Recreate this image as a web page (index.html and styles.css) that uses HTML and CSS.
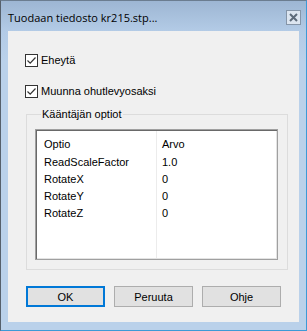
FILE: index.html
```html
<!DOCTYPE html>
<html>
<head>
<meta charset="utf-8">
<link rel="stylesheet" href="styles.css">
</head>
<body>
<div class="window">
  <div class="titlebar">
    <span class="title">Tuodaan tiedosto kr215.stp...</span>
    <span class="close">
      <svg width="9" height="9" viewBox="0 0 9 9"><path d="M1 1 L8 8 M8 1 L1 8" stroke="#5d6b7a" stroke-width="2" fill="none"/></svg>
    </span>
  </div>
  <div class="client">
    <label class="check"><span class="box"><svg width="11" height="11" viewBox="0 0 11 11"><path d="M1.5 5.5 L4.2 8.2 L9.5 2.5" stroke="#333" stroke-width="1.2" fill="none"/></svg></span>Eheytä</label>
    <label class="check second"><span class="box"><svg width="11" height="11" viewBox="0 0 11 11"><path d="M1.5 5.5 L4.2 8.2 L9.5 2.5" stroke="#333" stroke-width="1.2" fill="none"/></svg></span>Muunna ohutlevyosaksi</label>
    <fieldset class="group">
      <legend>Kääntäjän optiot</legend>
      <div class="list">
        <div class="col-line"></div>
        <div class="row tall"><span class="c1">Optio</span><span class="c2">Arvo</span></div>
        <div class="row tall"><span class="c1">ReadScaleFactor</span><span class="c2">1.0</span></div>
        <div class="row"><span class="c1">RotateX</span><span class="c2">0</span></div>
        <div class="row"><span class="c1">RotateY</span><span class="c2">0</span></div>
        <div class="row"><span class="c1">RotateZ</span><span class="c2">0</span></div>
      </div>
    </fieldset>
    <div class="buttons">
      <button class="btn default">OK</button>
      <button class="btn">Peruuta</button>
      <button class="btn">Ohje</button>
    </div>
  </div>
</div>
</body>
</html>
```
FILE: styles.css
```css
html, body {
  margin: 0;
  padding: 0;
  background: #ffffff;
}
.window {
  width: 307px;
  height: 331px;
  box-sizing: border-box;
  border-top: 1px solid #6b7d90;
  border-left: 1px solid #56606b;
  border-right: 1px solid #3d9ad6;
  border-bottom: 1px solid #3d9ad6;
  background: linear-gradient(to bottom, #9db6d3 0px, #b3cbe6 30px, #bad1ea 60px, #bad1ea 100%);
  padding: 0 7px 8px 7px;
  display: flex;
  flex-direction: column;
}
.titlebar {
  height: 30px;
  display: flex;
  align-items: center;
  justify-content: space-between;
  margin: 0 -7px;
  padding: 0 5px 0 7px;
}
.title {
  font-family: "Open Sans", "Noto Sans", sans-serif;
  font-size: 11px;
  color: #000;
  margin-top: 3px;
}
.close {
  width: 13px;
  height: 13px;
  border: 1px solid #8595a8;
  background: #dce5f0;
  display: flex;
  align-items: center;
  justify-content: center;
  margin-top: 2px;
}
.client {
  flex: 1;
  background: #f0f0f0;
  padding: 23px 0 0 17px;
  font-family: "Liberation Sans", Arial, sans-serif;
  font-size: 11px;
  color: #000;
  display: flex;
  flex-direction: column;
  align-items: flex-start;
}
.check {
  display: flex;
  align-items: center;
  height: 13px;
  line-height: 13px;
}
.check.second {
  margin-top: 18px;
}
.box {
  width: 11px;
  height: 11px;
  border: 1px solid #333;
  background: #fff;
  margin-right: 3px;
  display: flex;
}
.group {
  margin: 10px 0 0 1px;
  padding: 0 9px 9px 8px;
  border: 1px solid #dcdcdc;
  width: 243px;
  min-width: 0;
}
.group legend {
  padding: 0 1px;
  margin-left: 6px;
  line-height: 13px;
  height: 13px;
}
.list {
  position: relative;
  margin-top: 8px;
  width: 243px;
  height: 131px;
  box-sizing: border-box;
  border: 1px solid #a0a0a0;
  background: #fff;
  box-shadow: inset 1px 1px 0 #696969, inset -1px -1px 0 #e3e3e3;
  padding: 5px 0 0 1px;
}
.col-line {
  position: absolute;
  left: 120px;
  top: 1px;
  bottom: 1px;
  width: 1px;
  background: #ececec;
}
.row {
  display: flex;
  height: 17px;
  line-height: 17px;
}
.row.tall {
  height: 18px;
  line-height: 18px;
}
.c1 {
  width: 119px;
  padding-left: 7px;
  box-sizing: border-box;
}
.c2 {
  padding-left: 6px;
}
.buttons {
  display: flex;
  gap: 9px;
  margin-top: 16px;
  margin-left: 1px;
}
.btn {
  width: 79px;
  height: 21px;
  box-sizing: border-box;
  border: 1px solid #adadad;
  background: #e1e1e1;
  font-family: "Liberation Sans", Arial, sans-serif;
  font-size: 11px;
  color: #000;
  padding: 0;
  margin: 0;
}
.btn.default {
  border: 2px solid #0078d7;
}
```
